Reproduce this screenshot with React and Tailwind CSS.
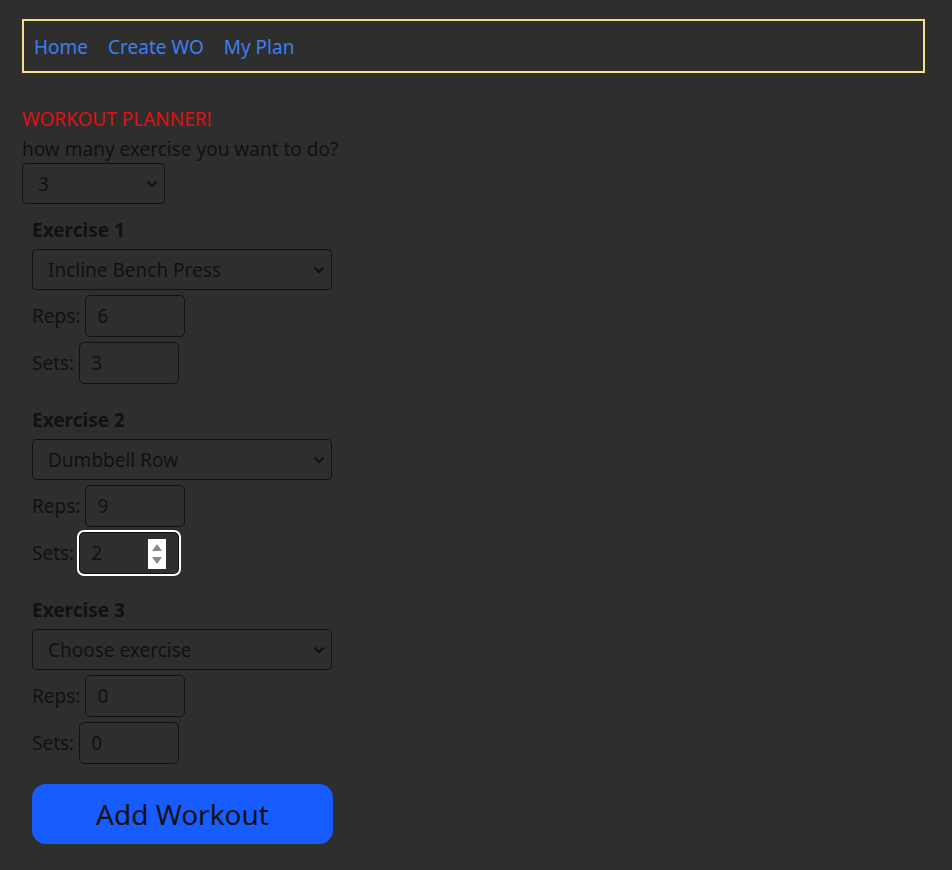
import React from "react";

function Chevron() {
  return (
    <svg className="pointer-events-none absolute right-[7px] top-1/2 -translate-y-1/2" width="12" height="8" viewBox="0 0 12 8">
      <path d="M1.5 1.5 L6 6 L10.5 1.5" fill="none" stroke="#111" strokeWidth="2" />
    </svg>
  );
}

function Select({ value, className }) {
  return (
    <div className={"relative " + className}>
      <select
        defaultValue={value}
        className="h-full w-full appearance-none rounded-[4px] border border-[#111] bg-transparent pl-[15px] pt-[1px] text-[19px] text-[#111] outline-none"
      >
        <option>{value}</option>
      </select>
      <Chevron />
    </div>
  );
}

function Field({ label, value, focused }) {
  return (
    <div className="flex h-[42px] items-center gap-[5px]">
      <span className="text-[19px] text-[#111]">{label}</span>
      {focused ? (
        <div className="relative h-[42px] w-[100px] rounded-[5px] border border-[#111] outline-2 outline-white">
          <input
            readOnly
            value={value}
            className="h-full w-full bg-transparent pl-[11px] text-[19px] text-[#111] outline-none"
          />
          <div className="absolute right-[12px] top-[6px] flex h-[30px] w-[18px] flex-col items-center justify-center gap-[6px] bg-white">
            <svg width="10" height="7" viewBox="0 0 10 7"><path d="M5 0 L10 7 L0 7 Z" fill="#8a8a8a" /></svg>
            <svg width="10" height="7" viewBox="0 0 10 7"><path d="M0 0 L10 0 L5 7 Z" fill="#8a8a8a" /></svg>
          </div>
        </div>
      ) : (
        <input
          readOnly
          value={value}
          className="h-[42px] w-[100px] rounded-[5px] border border-[#111] bg-transparent pl-[11px] text-[19px] text-[#111] outline-none"
        />
      )}
    </div>
  );
}

function Exercise({ n, choice, reps, sets, focusSets }) {
  return (
    <div className="flex flex-col">
      <div className="h-[26px] text-[19px] font-bold leading-[26px] text-[#111]">Exercise {n}</div>
      <Select value={choice} className="mt-[6px] h-[41px] w-[300px]" />
      <div className="mt-[5px] flex flex-col gap-[5px]">
        <Field label="Reps:" value={reps} />
        <Field label="Sets:" value={sets} focused={focusSets} />
      </div>
    </div>
  );
}

export default function App() {
  return (
    <div
      className="min-h-[870px] bg-[#2e2e2e] px-[22px] pt-[19px]"
      style={{ fontFamily: '"Noto Sans", "Open Sans", sans-serif' }}
    >
      <nav className="flex h-[54px] w-[903px] items-center gap-[20px] border-2 border-[#f7e08c] px-[10px] pt-[2px]">
        <a className="text-[19px] text-[#3d80f0]" href="#">Home</a>
        <a className="text-[19px] text-[#3d80f0]" href="#">Create WO</a>
        <a className="text-[19px] text-[#3d80f0]" href="#">My Plan</a>
      </nav>
      <div className="mt-[31px] text-[19px] leading-[30px] text-[#e01010]">WORKOUT PLANNER!</div>
      <div className="text-[19px] leading-[30px] text-[#111]">how many exercise you want to do?</div>
      <Select value="3" className="mt-[-1px] h-[41px] w-[143px]" />
      <div className="mt-[13px] flex flex-col gap-[23px] pl-[10px]">
        <Exercise n={1} choice="Incline Bench Press" reps="6" sets="3" />
        <Exercise n={2} choice="Dumbbell Row" reps="9" sets="2" focusSets />
        <Exercise n={3} choice="Choose exercise" reps="0" sets="0" />
      </div>
      <button className="ml-[10px] mt-[20px] h-[60px] w-[301px] rounded-[14px] bg-[#175cff] text-[28px] text-[#111]">
        Add Workout
      </button>
    </div>
  );
}
